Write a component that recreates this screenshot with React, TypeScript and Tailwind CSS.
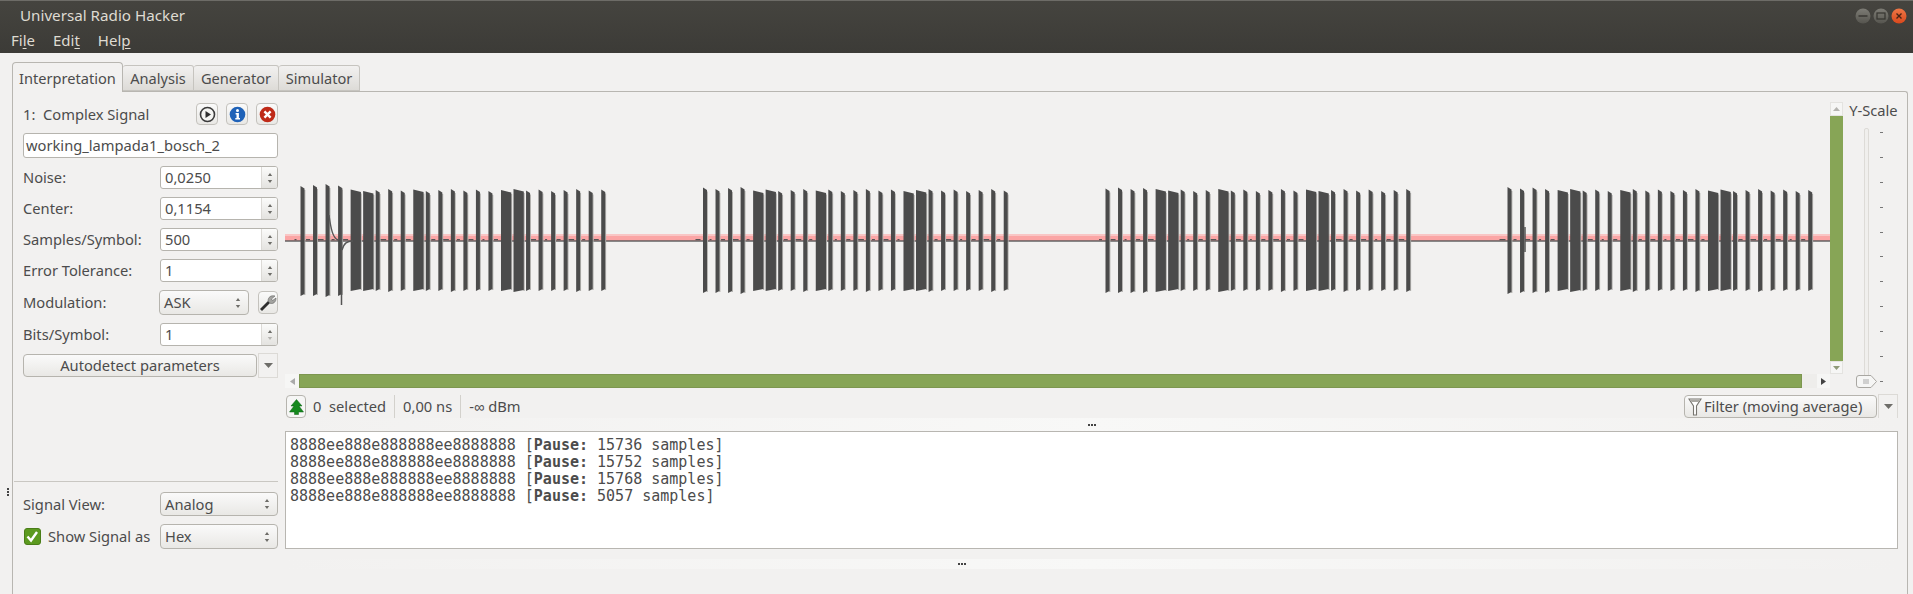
const FONT = "font-['Noto_Sans',sans-serif]";

const HEX = "8888ee888e888888ee8888888";
const BURSTS = [300.5, 703, 1105.5, 1507.5];

const UpDown = ({ dim = false }: { dim?: boolean }) => (
  <svg width="8" height="16" viewBox="0 0 8 16">
    <path d="M4 3 L6.2 6 H1.8 Z" fill="#6e6d69" />
    <path d="M4 13 L6.2 10 H1.8 Z" fill={dim ? "#b5b4b0" : "#6e6d69"} />
  </svg>
);

const Spin = ({ value, dim }: { value: string; dim?: boolean }) => (
  <div className="flex h-[23px] w-[118px] overflow-hidden rounded-[3px] border border-[#b6b4ae] bg-white">
    <div className="flex-1 pl-[4px] text-[14.7px] leading-[21px] text-[#4c4c4c]">{value}</div>
    <div className="flex w-[16px] items-center justify-center border-l border-[#dcdad6] bg-gradient-to-b from-[#fbfbfa] to-[#e4e3e0]">
      <UpDown dim={dim} />
    </div>
  </div>
);

const Combo = ({ value, className }: { value: string; className: string }) => (
  <div className={`flex items-center justify-between rounded-[4px] border border-[#b6b4ae] bg-gradient-to-b from-[#fafafa] to-[#e9e8e5] pl-[4px] pr-[6px] text-[14.7px] text-[#4c4c4c] ${className}`}>
    <span>{value}</span>
    <UpDown />
  </div>
);

const Field = ({ label, children }: { label: string; children: React.ReactNode }) => (
  <div className="flex items-center justify-between">
    <span className="text-[14.7px] text-[#4c4c4c]">{label}</span>
    {children}
  </div>
);

const IconButton = ({ children }: { children: React.ReactNode }) => (
  <div className="flex h-[22px] w-[22px] items-center justify-center rounded-[4px] border border-[#c4c2bd] bg-gradient-to-b from-[#fafafa] to-[#e9e8e5]">
    {children}
  </div>
);

const DropArrow = () => (
  <svg width="9" height="5" viewBox="0 0 9 5">
    <path d="M0 0 H9 L4.5 5 Z" fill="#6e6d69" />
  </svg>
);

const Grip = () => (
  <div className="flex gap-[1px]">
    <i className="h-[2px] w-[2px] bg-[#444]" />
    <i className="h-[2px] w-[2px] bg-[#444]" />
    <i className="h-[2px] w-[2px] bg-[#444]" />
  </div>
);

const WindowButton = ({ kind }: { kind: "min" | "max" | "close" }) => (
  <svg width="16" height="16" viewBox="0 0 16 16">
    <defs>
      <linearGradient id={`wb-${kind}`} x1="0" y1="0" x2="0" y2="1">
        <stop offset="0" stopColor={kind === "close" ? "#f07746" : "#7d7c75"} />
        <stop offset="1" stopColor={kind === "close" ? "#d9481c" : "#56554f"} />
      </linearGradient>
    </defs>
    <circle cx="8" cy="8" r="7.5" fill={`url(#wb-${kind})`} />
    {kind === "min" && <rect x="3.5" y="7.3" width="9" height="1.4" fill="#35342f" />}
    {kind === "max" && <rect x="4" y="5" width="8" height="6" fill="none" stroke="#35342f" strokeWidth="1.2" />}
    {kind === "close" && <path d="M5.5 5.5 L10.5 10.5 M10.5 5.5 L5.5 10.5" stroke="#4a2314" strokeWidth="1.4" />}
  </svg>
);

// waveform, one bar per hex digit. e is a wide symbol, 8 a narrow one
const Waveform = () => {
  const bars: React.ReactNode[] = [];
  const noise: React.ReactNode[] = [];
  const cy = 138;
  BURSTS.forEach((start, b) => {
    HEX.split("").forEach((c, i) => {
      const x = start - 285 + i * 12.53;
      const w = c === "e" ? 10.3 : 4;
      const jitter = ((i * 7 + b * 3) % 5) * 0.5;
      const extra = i < 4 ? (b === 0 ? 5 : 2) : 0;
      const top = cy - 49 - extra - jitter;
      const bottom = cy + 51 + extra + (jitter > 1.5 ? 1 : 0);
      bars.push(
        <g key={`${b}-${i}`}>
          <rect x={x + w - 0.4} y={top + 4} width="1.3" height={bottom - top - 5} fill="#b4b3b0" />
          <path d={`M${x} ${top} L${x + w} ${top + 2.5} V${bottom - 2} L${x} ${bottom} Z`} fill="#4b4b4b" />
        </g>
      );
      noise.push(<rect key={`n${b}-${i}`} x={x - 6 - jitter} y="137" width={2 + jitter * 2} height="1.2" fill="#555" />);
    });
  });
  return (
    <svg width="1545" height="272" viewBox="0 0 1545 272" className="block">
      <rect x="0" y="132" width="1545" height="2" fill="#f9c6c5" />
      <rect x="0" y="134" width="1545" height="5" fill="#fba5a5" />
      <rect x="0" y="138.3" width="1545" height="1.4" fill="#5a5a5a" />
      {noise}
      {bars}
      {/* ringing on the first burst */}
      <path d="M44 113 C46 128 48 136 53 138" fill="none" stroke="#555" strokeWidth="1.4" />
      <path d="M56.5 203 V86" stroke="#555" strokeWidth="1.5" />
      <path d="M57 148 C59 141 62 139 68 139" fill="none" stroke="#555" strokeWidth="1.4" />
      <path d="M1240 125 V150" stroke="#555" strokeWidth="1.5" />
    </svg>
  );
};

const App = () => {
  return (
    <div className={`flex h-[594px] w-[1913px] flex-col overflow-hidden bg-[#f2f1f0] ${FONT}`}>
      {/* title and menu */}
      <div className="h-[53px] shrink-0 border-t border-[#6d6c67] bg-gradient-to-b from-[#45443f] to-[#3c3b37] text-[#dfdbd2]">
        <div className="flex h-[29px] items-center justify-between pl-[20px] pr-[6px]">
          <span className="text-[15.2px]">Universal Radio Hacker</span>
          <div className="flex gap-[2px]">
            <WindowButton kind="min" />
            <WindowButton kind="max" />
            <WindowButton kind="close" />
          </div>
        </div>
        <div className="-mt-[1px] flex gap-[18px] pl-[11px] text-[15px] leading-[22px]">
          <span>Fi<span className="underline underline-offset-2">l</span>e</span>
          <span>Edi<span className="underline underline-offset-2">t</span></span>
          <span>Hel<span className="underline underline-offset-2">p</span></span>
        </div>
      </div>

      <div className="relative flex-1 pl-[12px] pr-[5px] pt-[9px]">
        {/* tabs */}
        <div className="relative z-10 flex h-[30px] items-end text-[14.6px] text-[#4c4c4c]">
          <div className="flex h-[30px] w-[111px] items-center justify-center rounded-t-[4px] border border-b-0 border-[#b8b6b1] bg-[#f2f1f0] pt-[2px]">Interpretation</div>
          <div className="mb-[1px] flex h-[26px] w-[71px] items-center justify-center rounded-t-[3px] border border-l-0 border-[#c6c4bf] bg-gradient-to-b from-[#f2f1f0] to-[#dddbd7] pt-[2px]">Analysis</div>
          <div className="mb-[1px] flex h-[26px] w-[85px] items-center justify-center rounded-t-[3px] border border-l-0 border-[#c6c4bf] bg-gradient-to-b from-[#f2f1f0] to-[#dddbd7] pt-[2px]">Generator</div>
          <div className="mb-[1px] flex h-[26px] w-[81px] items-center justify-center rounded-t-[3px] border border-l-0 border-[#c6c4bf] bg-gradient-to-b from-[#f2f1f0] to-[#dddbd7] pt-[2px]">Simulator</div>
        </div>

        {/* pane */}
        <div className="-mt-[1px] flex h-[520px] rounded-tr-[3px] border-l border-r border-t border-[#b8b6b1] pt-[11px]">
          {/* left column */}
          <div className="ml-[10px] flex w-[255px] flex-col gap-[8px]">
            <div className="flex h-[22px] items-center justify-between">
              <span className="whitespace-pre text-[14.7px] text-[#4c4c4c]">1:  Complex Signal</span>
              <div className="flex gap-[8px]">
                <IconButton>
                  <svg width="17" height="17" viewBox="0 0 17 17">
                    <circle cx="8.5" cy="8.5" r="7" fill="#f4f4f2" stroke="#3b3b3b" strokeWidth="1.6" />
                    <path d="M6.5 5 L12 8.5 L6.5 12 Z" fill="#2e2e2e" />
                  </svg>
                </IconButton>
                <IconButton>
                  <svg width="17" height="17" viewBox="0 0 17 17">
                    <circle cx="8.5" cy="8.5" r="7.8" fill="#1f62b8" />
                    <circle cx="8.5" cy="4.6" r="1.5" fill="#fff" />
                    <path d="M6.6 7 H9.9 V12 H11 V13.5 H6.3 V12 H7.5 V8.4 H6.6 Z" fill="#fff" />
                  </svg>
                </IconButton>
                <IconButton>
                  <svg width="17" height="17" viewBox="0 0 17 17">
                    <circle cx="8.5" cy="8.5" r="7.8" fill="#bf2a18" />
                    <path d="M5.4 5.4 L11.6 11.6 M11.6 5.4 L5.4 11.6" stroke="#fff" strokeWidth="2.4" />
                  </svg>
                </IconButton>
              </div>
            </div>

            <div className="h-[25px] rounded-[3px] border border-[#b6b4ae] bg-white pl-[2px] text-[14.7px] leading-[23px] text-[#4c4c4c]">working_lampada1_bosch_2</div>

            <Field label="Noise:"><Spin value="0,0250" /></Field>
            <Field label="Center:"><Spin value="0,1154" /></Field>
            <Field label="Samples/Symbol:"><Spin value="500" /></Field>
            <Field label="Error Tolerance:"><Spin value="1" /></Field>
            <div className="flex items-center">
              <span className="w-[136px] text-[14.7px] text-[#4c4c4c]">Modulation:</span>
              <Combo value="ASK" className="h-[25px] w-[90px]" />
              <div className="ml-[9px] flex h-[23px] w-[20px] items-center justify-center rounded-[4px] border border-[#c4c2bd] bg-gradient-to-b from-[#fafafa] to-[#e9e8e5]">
                <svg width="18" height="18" viewBox="0 0 18 18">
                  <path d="M2 16 L10 8" stroke="#2e2e2e" strokeWidth="2.8" />
                  <path d="M9 7 C9 3 12 1 16 2 L12.5 5 L13.5 6.5 L17 4 C17.3 8 14 10.5 11 9.2 Z" fill="#a3a3a0" stroke="#555" strokeWidth="0.5" />
                </svg>
              </div>
            </div>
            <Field label="Bits/Symbol:"><Spin value="1" dim /></Field>

            <div className="-mt-[1px] flex items-center gap-[1px]">
              <div className="flex h-[23px] w-[235px] items-center justify-center rounded-[4px] border border-[#b6b4ae] bg-gradient-to-b from-[#fafafa] to-[#e9e8e5] text-[14.7px] text-[#4c4c4c]">Autodetect parameters</div>
              <div className="flex h-[25px] w-[20px] items-center justify-center border border-[#dcdad6]"><DropArrow /></div>
            </div>

            <div className="-ml-[9px] mt-[95px] border-t border-[#c9c7c2]" />
            <div className="mt-[2px] flex items-center justify-between">
              <span className="text-[14.7px] text-[#4c4c4c]">Signal View:</span>
              <Combo value="Analog" className="h-[24px] w-[118px]" />
            </div>
            <div className="flex items-center justify-between">
              <label className="flex items-center gap-[7px] text-[14.7px] text-[#4c4c4c]">
                <svg className="ml-[1px]" width="17" height="17" viewBox="0 0 17 17">
                  <rect x="0.5" y="0.5" width="16" height="16" rx="2.5" fill="#5c9a1f" stroke="#4a7d18" />
                  <path d="M3.5 8.5 L7 12.5 L13 4" fill="none" stroke="#fff" strokeWidth="2.4" />
                </svg>
                Show Signal as
              </label>
              <Combo value="Hex" className="h-[25px] w-[118px]" />
            </div>
          </div>

          {/* right column */}
          <div className="-mt-[1px] ml-[7px] flex w-[1613px] flex-col">
            <div className="flex h-[286px]">
              <div className="w-[1545px]">
                <Waveform />
                <div className="flex h-[14px] bg-[#eeedeb]">
                  <div className="flex w-[14px] items-center justify-center bg-[#f6f6f5]">
                    <svg width="5" height="7" viewBox="0 0 5 7"><path d="M5 0 V7 L0 3.5 Z" fill="#aaa" /></svg>
                  </div>
                  <div className="w-[1503px] border border-[#7d9650] bg-[#87a556]" />
                  <div className="ml-[15px] flex w-[13px] items-center justify-center bg-[#f6f6f5]">
                    <svg width="5" height="7" viewBox="0 0 5 7"><path d="M0 0 V7 L5 3.5 Z" fill="#444" /></svg>
                  </div>
                </div>
              </div>

              <div className="flex h-[272px] w-[14px] flex-col">
                <div className="flex h-[14px] items-center justify-center border border-[#e4e3e0] bg-[#f6f6f5]">
                  <svg width="7" height="4" viewBox="0 0 7 4"><path d="M3.5 0 L7 4 H0 Z" fill="#b5b4b0" /></svg>
                </div>
                <div className="flex-1 bg-[#87a556]" />
                <div className="flex h-[13px] items-center justify-center border border-[#e4e3e0] bg-[#f6f6f5]">
                  <svg width="7" height="4" viewBox="0 0 7 4"><path d="M0 0 H7 L3.5 4 Z" fill="#8f9a78" /></svg>
                </div>
              </div>

              <div className="ml-[6px] flex w-[52px] flex-col">
                <span className="whitespace-nowrap text-[14.7px] leading-[17px] text-[#4c4c4c]">Y-Scale</span>
                <div className="relative mt-[9px] h-[260px]">
                  <div className="absolute left-[15px] top-0 h-[250px] w-[5px] rounded-t-[2px] border border-[#dddbd7] bg-[#f0efed]" />
                  <div className="absolute left-[31px] top-[4px] flex h-[250px] flex-col justify-between">
                    {[0, 1, 2, 3, 4, 5, 6, 7, 8, 9, 10].map((i) => (
                      <div key={i} className="h-[1px] w-[3px] bg-[#777]" />
                    ))}
                  </div>
                  <svg className="absolute left-[7px] top-[247px]" width="21" height="13" viewBox="0 0 21 13">
                    <path d="M3 0.5 H15 L20.5 6.5 L15 12.5 H3 Q0.5 12.5 0.5 10 V3 Q0.5 0.5 3 0.5 Z" fill="#f6f6f5" stroke="#a9a7a2" />
                    <path d="M8 4 V9 M10 4 V9 M12 4 V9" stroke="#aaa" />
                  </svg>
                </div>
              </div>
            </div>

            <div className="mt-[7px] flex h-[23px] items-center pl-[1px] text-[14.7px] text-[#4c4c4c]">
              <div className="flex h-[23px] w-[20px] items-center justify-center rounded-[4px] border border-[#b6b4ae] bg-[#f6f6f5]">
                <svg width="15" height="16" viewBox="0 0 15 16">
                  <path d="M7.5 0.5 L13 7 H10 L14.5 13 H9.5 V15.5 H5.5 V13 H0.5 L5 7 H2 Z" fill="#15891d" stroke="#0b5e12" strokeWidth="0.5" />
                </svg>
              </div>
              <span className="ml-[7px] whitespace-pre">0  selected</span>
              <div className="ml-[8px] h-[23px] border-l border-[#d3d1cc]" />
              <span className="ml-[8px]">0,00 ns</span>
              <div className="ml-[8px] h-[23px] border-l border-[#d3d1cc]" />
              <span className="ml-[8px]">-∞ dBm</span>
              <div className="ml-auto flex h-[23px] w-[193px] items-center rounded-[4px] border border-[#b6b4ae] bg-gradient-to-b from-[#fafafa] to-[#e9e8e5] pl-[3px]">
                <svg width="14" height="20" viewBox="0 0 14 20">
                  <path d="M1 2 H13 L8.5 9 V18 H5.5 V9 Z" fill="#fff" stroke="#77756f" strokeWidth="1.1" />
                  <path d="M2 2.5 H12 L10.5 5 H3.5 Z" fill="#a9a7a2" />
                </svg>
                <span className="ml-[2px]">Filter (moving average)</span>
              </div>
              <div className="ml-[1px] flex h-[25px] w-[20px] items-center justify-center border border-[#dcdad6]"><DropArrow /></div>
            </div>

            {/* splitter */}
            <div className="flex h-[13px] items-center justify-center bg-gradient-to-r from-[#f2f1f0] via-[#f8f8f7] to-[#f2f1f0]">
              <Grip />
            </div>

            <div className="h-[118px] border border-[#b8b6b1] bg-white pl-[4px] pt-[5px] font-['DejaVu_Sans_Mono',monospace] text-[15px] leading-[17px] text-[#4c4c4c]">
              <div>8888ee888e888888ee8888888 [<b>Pause:</b> 15736 samples]</div>
              <div>8888ee888e888888ee8888888 [<b>Pause:</b> 15752 samples]</div>
              <div>8888ee888e888888ee8888888 [<b>Pause:</b> 15768 samples]</div>
              <div>8888ee888e888888ee8888888 [<b>Pause:</b> 5057 samples]</div>
            </div>

            {/* splitter */}
            <div className="mt-[10px] flex h-[10px] items-center justify-center bg-gradient-to-r from-[#f2f1f0] via-[#f8f8f7] to-[#f2f1f0]">
              <div className="-ml-[260px]"><Grip /></div>
            </div>
          </div>
        </div>

        {/* left splitter grip */}
        <div className="absolute left-[7px] top-[435px] flex flex-col gap-[1px]">
          <i className="h-[2px] w-[2px] bg-[#444]" />
          <i className="h-[2px] w-[2px] bg-[#444]" />
          <i className="h-[2px] w-[2px] bg-[#444]" />
        </div>
      </div>
    </div>
  );
};

export default App;
